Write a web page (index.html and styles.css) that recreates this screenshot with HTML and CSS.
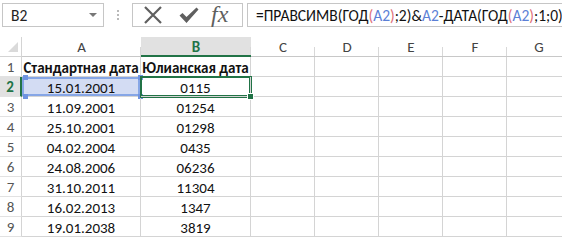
FILE: index.html
```html
<!DOCTYPE html>
<html>
<head>
<meta charset="utf-8">
<link rel="stylesheet" href="styles.css">
</head>
<body>
<div class="toolbar">
  <div class="namebox"><span class="ref">B2</span><span class="arrow"></span></div>
  <div class="sep"><span></span><span></span><span></span></div>
  <div class="iconbox">
    <svg class="ico-x" width="20" height="18" viewBox="0 0 20 18"><path d="M2 1 L18 17 M18 1 L2 17" stroke="#5f5f5f" stroke-width="2.2" fill="none"/></svg>
    <svg class="ico-ok" width="20" height="18" viewBox="0 0 20 18"><path d="M0.5 9.5 L3.5 7 L7.5 11 L17.5 1.5 L19.5 3.5 L7.5 17 Z" fill="#5f5f5f"/></svg>
    <span class="fx">fx</span>
  </div>
  <div class="formula">=ПРАВСИМВ(ГОД<span class="p">(</span><span class="r">A2</span><span class="p">)</span>;2)&amp;<span class="r">A2</span>-ДАТА(ГОД<span class="p">(</span><span class="r">A2</span><span class="p">)</span>;1;0)</div>
</div>
<div class="sheet">
  <div class="corner"><svg width="22" height="20" viewBox="0 0 22 20"><path d="M18 5 L18 15 L8 15 Z" fill="#dadada"/></svg></div>
  <div class="ch">A</div><div class="ch sel">B</div><div class="ch">C</div><div class="ch">D</div><div class="ch">E</div><div class="ch">F</div><div class="ch">G</div>

  <div class="rh">1</div><div class="c b">Стандартная дата</div><div class="c b">Юлианская дата</div><div class="c"></div><div class="c"></div><div class="c"></div><div class="c"></div><div class="c"></div>

  <div class="rh sel">2</div><div class="c hl">15.01.2001<i class="h tl"></i><i class="h tr"></i><i class="h bl"></i><i class="h br"></i></div><div class="c act">0115<i class="fill"></i></div><div class="c"></div><div class="c"></div><div class="c"></div><div class="c"></div><div class="c"></div>

  <div class="rh">3</div><div class="c">11.09.2001</div><div class="c">01254</div><div class="c"></div><div class="c"></div><div class="c"></div><div class="c"></div><div class="c"></div>

  <div class="rh">4</div><div class="c">25.10.2001</div><div class="c">01298</div><div class="c"></div><div class="c"></div><div class="c"></div><div class="c"></div><div class="c"></div>

  <div class="rh">5</div><div class="c">04.02.2004</div><div class="c">0435</div><div class="c"></div><div class="c"></div><div class="c"></div><div class="c"></div><div class="c"></div>

  <div class="rh">6</div><div class="c">24.08.2006</div><div class="c">06236</div><div class="c"></div><div class="c"></div><div class="c"></div><div class="c"></div><div class="c"></div>

  <div class="rh">7</div><div class="c">31.10.2011</div><div class="c">11304</div><div class="c"></div><div class="c"></div><div class="c"></div><div class="c"></div><div class="c"></div>

  <div class="rh">8</div><div class="c">16.02.2013</div><div class="c">1347</div><div class="c"></div><div class="c"></div><div class="c"></div><div class="c"></div><div class="c"></div>

  <div class="rh">9</div><div class="c">19.01.2038</div><div class="c">3819</div><div class="c"></div><div class="c"></div><div class="c"></div><div class="c"></div><div class="c"></div>
</div>
</body>
</html>
```
FILE: styles.css
```css
html, body {
  margin: 0;
  padding: 0;
  background: #fff;
  width: 562px;
  height: 240px;
  overflow: hidden;
  font-family: "Carlito", "Liberation Sans", Arial, sans-serif;
}
.toolbar {
  display: flex;
  align-items: stretch;
  height: 24px;
  padding: 3px 0 10px 2px;
}
.namebox {
  width: 102px;
  border: 1px solid #c6c6c6;
  display: flex;
  align-items: center;
  justify-content: space-between;
  padding: 0 6px 0 8px;
  box-sizing: border-box;
}
.ref {
  font-size: 15.5px;
  color: #222;
}
.arrow {
  width: 0;
  height: 0;
  border-left: 4px solid transparent;
  border-right: 4px solid transparent;
  border-top: 4px solid #777;
  margin-top: -1px;
}
.sep {
  width: 28px;
  display: flex;
  flex-direction: column;
  align-items: center;
  justify-content: center;
  gap: 2px;
}
.sep span {
  width: 2px;
  height: 2px;
  background: #b9b9b9;
}
.iconbox {
  width: 111px;
  border: 1px solid #c6c6c6;
  box-sizing: border-box;
  display: flex;
  align-items: center;
  padding-left: 10px;
}
.ico-x { margin-right: 16px; }
.ico-ok { margin-right: 12px; }
.fx {
  font-family: "Liberation Serif", "Times New Roman", serif;
  font-style: italic;
  font-size: 24px;
  color: #5f5f5f;
  line-height: 1;
  margin-top: -3px;
}
.formula {
  flex: 1;
  margin-left: 4px;
  border: 1px solid #c6c6c6;
  border-right: none;
  box-sizing: border-box;
  display: flex;
  align-items: center;
  padding-left: 8px;
  font-size: 15.5px;
  color: #111;
  white-space: nowrap;
  overflow: hidden;
}
.formula .r { color: #5b7fd6; }
.formula .p { color: #e0707a; }

.sheet {
  display: grid;
  grid-template-columns: 22px 119px 110px 64px 64px 64px 64px 64px;
  grid-template-rows: 20px;
  grid-auto-rows: 20px;
  width: 571px;
  font-size: 15px;
}
.corner {
  border-bottom: 1px solid #d4d4d4;
  border-right: 1px solid #d4d4d4;
  box-sizing: border-box;
}
.corner svg { display: block; }
.ch {
  box-sizing: border-box;
  border-bottom: 1px solid #c8c8c8;
  background-image: linear-gradient(to bottom, transparent 55%, #d8d8d8 55%);
  background-size: 1px 100%;
  background-repeat: no-repeat;
  background-position: right top;
  display: flex;
  align-items: center;
  justify-content: center;
  color: #444;
  font-size: 15px;
  padding-top: 1px;
}
.ch.sel {
  background-color: #e1e1e1;
  color: #217346;
  font-weight: bold;
  border-bottom: 2px solid #217346;
}
.rh {
  box-sizing: border-box;
  border-right: 1px solid #d4d4d4;
  border-bottom: 1px solid #e2e2e2;
  display: flex;
  align-items: center;
  justify-content: center;
  color: #555;
  padding-top: 1px;
}
.rh.sel {
  background: #e1e1e1;
  color: #217346;
  font-weight: bold;
  border-right: 2px solid #217346;
}
.c {
  box-sizing: border-box;
  border-right: 1px solid #d4d4d4;
  border-bottom: 1px solid #d4d4d4;
  display: flex;
  align-items: center;
  justify-content: center;
  color: #111;
  white-space: nowrap;
  padding-top: 2px;
  position: relative;
}
.c.b { font-weight: bold; }
.c.hl {
  background: #d3dcf3;
  box-shadow: inset 0 0 0 2px #86a6e6;
}
.h {
  position: absolute;
  width: 5px;
  height: 5px;
  background: #6f93e0;
}
.h.tl { left: 1px; top: -2px; }
.h.tr { right: -3px; top: -2px; }
.h.bl { left: 1px; bottom: -3px; }
.h.br { right: -3px; bottom: -3px; }
.c.act {
  box-shadow: 0 0 0 1px #217346, inset 0 0 0 1px #217346;
  z-index: 2;
}
.fill {
  position: absolute;
  right: -4px;
  bottom: -4px;
  width: 5px;
  height: 5px;
  background: #217346;
  border: 1px solid #fff;
}
```
